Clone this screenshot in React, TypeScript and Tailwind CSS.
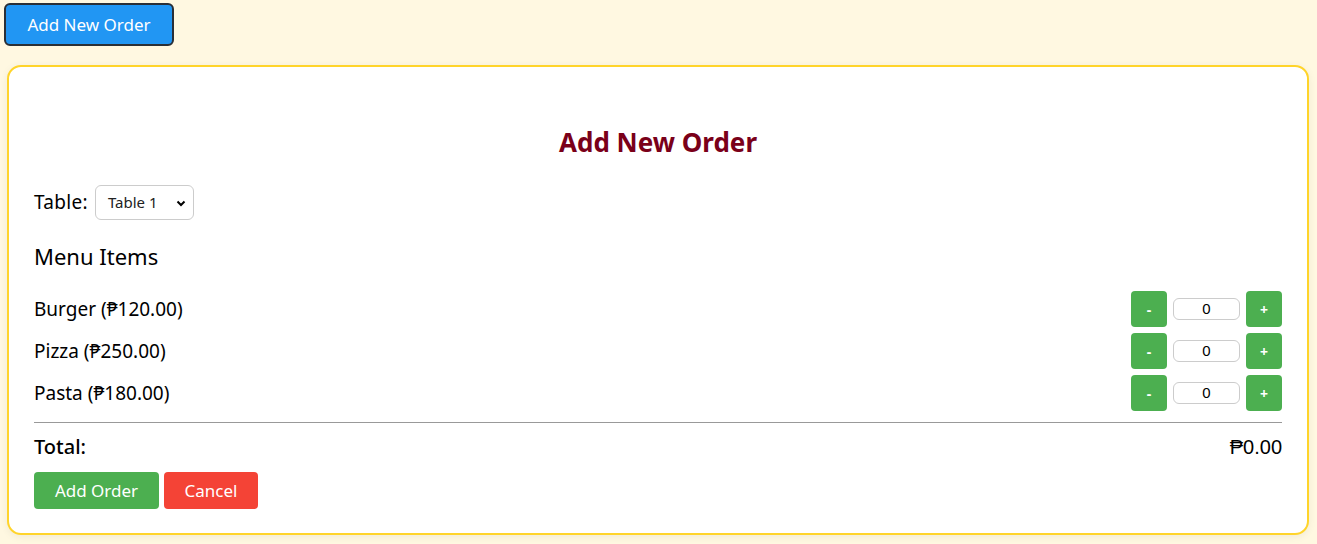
const items = [
  { name: 'Burger', price: 120 },
  { name: 'Pizza', price: 250 },
  { name: 'Pasta', price: 180 },
]

const body = { fontFamily: '"Noto Sans", "DejaVu Sans", sans-serif' }

export default function App() {
  return (
    <div className="min-h-[544px] bg-[#fff8e1] pt-[3px] px-[4px]" style={body}>
      <button className="h-[43px] w-[170px] rounded-[6px] border-2 border-[#2a2f36] bg-[#2196f3] text-[17px] text-white">
        Add New Order
      </button>

      <div className="mt-[19px] ml-[3px] w-[1302px] rounded-[14px] border-2 border-[#ffd42a] bg-white px-[25px] pt-[59px] pb-[24px] shadow-[0_2px_8px_rgba(0,0,0,0.06)]">
        <h2 className="text-center text-[26px] font-bold leading-[32px] text-[#7a0019]">Add New Order</h2>

        <div className="mt-[27px] flex items-center gap-[7px] text-[19px] text-black">
          <span className="tracking-[0.3px]">Table:</span>
          <div className="flex h-[35px] w-[99px] items-center justify-between rounded-[6px] border border-[#cccccc] pl-[12px] pr-[6px] text-[15px] text-[#222]">
            <span>Table 1</span>
            <svg width="12" height="12" viewBox="0 0 12 12">
              <path d="M2.5 4.5 6 8l3.5-3.5" fill="none" stroke="#000" strokeWidth="2" />
            </svg>
          </div>
        </div>

        <h3 className="mt-[20px] text-[22px] leading-[32px] text-black">Menu Items</h3>

        <div className="mt-[19px] flex flex-col gap-[6px]">
          {items.map((it) => (
            <div key={it.name} className="flex h-[36px] items-center justify-between">
              <span className="text-[19px] text-black">
                {it.name} (₱{it.price.toFixed(2)})
              </span>
              <div className="flex items-center gap-[6px]">
                <button className="h-[36px] w-[36px] rounded-[4px] bg-[#4caf50] text-[14px] font-bold text-white">-</button>
                <div className="flex h-[22px] w-[67px] items-center justify-center rounded-[6px] border border-[#cccccc] text-[15px] text-black" style={{ fontFamily: '"Liberation Sans", sans-serif' }}>
                  0
                </div>
                <button className="h-[36px] w-[36px] rounded-[4px] bg-[#4caf50] text-[14px] font-bold text-white">+</button>
              </div>
            </div>
          ))}
        </div>

        <hr className="mt-[11px] border-t border-[#999999]" />

        <div className="mt-[9px] flex items-center justify-between text-[20px] font-medium text-black">
          <span>Total:</span>
          <span style={{ fontFamily: '"Liberation Sans", sans-serif' }}>₱0.00</span>
        </div>

        <div className="mt-[10px] flex gap-[5px]">
          <button className="h-[37px] w-[125px] rounded-[4px] bg-[#4caf50] text-[17px] text-white">Add Order</button>
          <button className="h-[37px] w-[94px] rounded-[4px] bg-[#f44336] text-[17px] text-white">Cancel</button>
        </div>
      </div>
    </div>
  )
}
